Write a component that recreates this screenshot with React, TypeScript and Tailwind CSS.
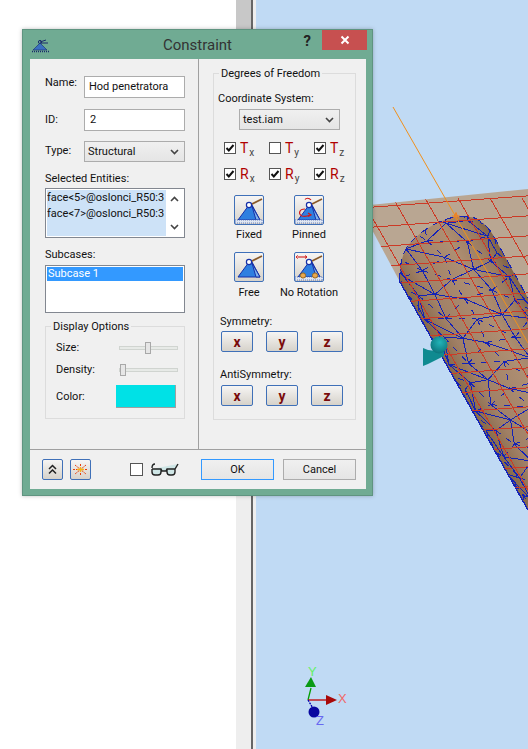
import type { ReactNode } from 'react';

const BTN = 'bg-gradient-to-b from-[#f6f5f4] to-[#d6d2ca] border border-[#3f70b8] rounded-[2px]';

function Chevron({ up = false }: { up?: boolean }) {
  return (
    <svg width="9" height="6" viewBox="0 0 9 6" className={up ? 'rotate-180' : ''}>
      <path d="M1 1l3.5 3.5L8 1" fill="none" stroke="#444" strokeWidth="1.6" />
    </svg>
  );
}

function Group({ title, className, children }: { title: string; className: string; children: ReactNode }) {
  return (
    <div className={`relative border border-[#dcdcdc] ${className}`}>
      <span className="absolute -top-[7px] left-[5px] bg-[#f0f0f0] px-[2px] leading-[14px]">{title}</span>
      {children}
    </div>
  );
}

function Select({ value, className }: { value: string; className: string }) {
  return (
    <div className={`flex items-center justify-between border border-[#acacac] bg-gradient-to-b from-[#f0f0f0] to-[#e5e5e5] pl-[3px] pr-[5px] ${className}`}>
      <span>{value}</span>
      <Chevron />
    </div>
  );
}

function Check({ on = true, className = '' }: { on?: boolean; className?: string }) {
  return (
    <div className={`h-[12px] w-[12px] border border-[#555] bg-white ${className}`}>
      {on && (
        <svg width="10" height="10" viewBox="0 0 10 10">
          <path d="M1.5 5l2.3 2.4L8.5 2" fill="none" stroke="#111" strokeWidth="2" />
        </svg>
      )}
    </div>
  );
}

function Dof({ letter, axis, on = true }: { letter: string; axis: string; on?: boolean }) {
  return (
    <div className="flex h-[12px] items-center">
      <Check on={on} />
      <span className="ml-[4px] text-[14px] leading-[12px] text-[#b00000]">{letter}</span>
      <span className="ml-[1px] mt-[9px] text-[10px] leading-[10px] text-[#444]">{axis}</span>
    </div>
  );
}

// kinematic symbol used on the four big buttons
function JointIcon({ kind }: { kind: 'fixed' | 'pinned' | 'free' | 'norot' }) {
  return (
    <svg width="28" height="28" viewBox="0 0 28 28">
      <path d="M15 9L27 3" stroke="#8a5a2a" strokeWidth="1.8" />
      <path d="M3 24L14 9h3l8 15z" fill="#2f7fe0" stroke="#1630a8" />
      <path d="M17 10l4 14h4z" fill="#7fb4ee" stroke="#1630a8" />
      {kind !== 'free' && <rect x="0" y="24" width="28" height="3" fill="#dfe6f2" stroke="#4a66b0" strokeDasharray="1 1" strokeWidth="0.8" />}
      <circle cx="14" cy="9" r="2.6" fill="#fff" stroke="#1630a8" strokeWidth="1.2" />
      {kind === 'pinned' && (
        <g fill="none" stroke="#d01818" strokeWidth="1.2">
          <path d="M16 4C14 1.5 11 2 10 3.5" />
          <path d="M10 13C4 13 3 18 7 20c3 1 6 0 8-1" />
          <path d="M13 17l3 2-3 1.5" />
        </g>
      )}
      {kind === 'norot' && (
        <g>
          <path d="M3 4h9" stroke="#d01818" strokeWidth="1.1" />
          <path d="M3 2.5L1 4l2 1.5M10 2.5L12 4l-2 1.5" fill="none" stroke="#d01818" />
          <circle cx="8" cy="22.5" r="2.6" fill="#e8a850" stroke="#9a6a20" />
          <circle cx="20" cy="22.5" r="2.6" fill="#e8a850" stroke="#9a6a20" />
        </g>
      )}
    </svg>
  );
}

function BigButton({ kind, label, gap }: { kind: 'fixed' | 'pinned' | 'free' | 'norot'; label: string; gap: string }) {
  return (
    <div className="flex flex-col items-center">
      <div className={`h-[30px] w-[30px] ${BTN}`}>
        <JointIcon kind={kind} />
      </div>
      <span className={`leading-[14px] whitespace-nowrap ${gap}`}>{label}</span>
    </div>
  );
}

function AxisButtons({ className }: { className: string }) {
  return (
    <div className={`flex gap-[13px] ${className}`}>
      {['x', 'y', 'z'].map((a) => (
        <div key={a} className={`flex h-[21px] w-[32px] items-center justify-center text-[14px] font-bold text-[#7a0c0c] ${BTN}`}>
          {a}
        </div>
      ))}
    </div>
  );
}

function Slider({ thumb }: { thumb: string }) {
  return (
    <div className="relative h-[4px] w-[59px] border border-[#d0d4d0] bg-[#e7eae7]">
      <div className={`absolute -top-[5px] h-[12px] w-[6px] border border-[#a8a8a8] bg-[#e6e6e6] ${thumb}`} />
    </div>
  );
}

// cylinder axis frame, used to lay out the FE mesh
function pt(s: number, t: number): [number, number] {
  return [400 + 0.49 * s + 0.87 * t, 282 + 0.87 * s - 0.49 * t];
}
const jitter = (a: number, b: number) => Math.sin(a * 12.9898 + b * 78.233) * 5;

function buildMesh() {
  const lines: string[] = [];
  const dashed: string[] = [];
  const cols = [0, 7, 24, 48, 74, 94, 104];
  const node = (i: number, j: number): [number, number] => pt(-50 + i * 25 + jitter(i, j), cols[j] + jitter(j, i));
  for (let i = 0; i < 14; i++) {
    for (let j = 0; j < cols.length; j++) {
      const [x, y] = node(i, j);
      if (j < cols.length - 1) {
        const [a, b] = node(i, j + 1);
        (i % 2 ? lines : dashed).push(`M${x} ${y}L${a} ${b}`);
        const [c, d] = node(i + 1, j + 1);
        ((i + j) % 2 ? lines : dashed).push(`M${x} ${y}L${c} ${d}`);
      }
      const [e, f] = node(i + 1, j);
      ((i * 3 + j) % 3 ? lines : dashed).push(`M${x} ${y}L${e} ${f}`);
    }
  }
  return { solid: lines.join(''), broken: dashed.join('') };
}

const CYL = 'M400 282C399 262 404 248 413 240C424 229 440 219 456 217C468 216 476 217 480 221C486 225 490 230 493 235L540 320V530L528 510Z';
const PLANE = 'M370 205L528 189V300L400 282L370 226Z';

function Scene() {
  const mesh = buildMesh();
  const ys = [200, 220, 240, 260, 278, 297, 315, 333, 353, 372, 392, 411, 431, 451, 471, 491];
  const xs = [361, 393, 425, 458, 490, 522, 554];
  return (
    <svg viewBox="256 0 272 749" className="block h-full w-full">
      <defs>
        <linearGradient id="cyl" gradientUnits="userSpaceOnUse" x1="400" y1="282" x2="491" y2="231">
          <stop offset="0" stopColor="#866848" />
          <stop offset="0.2" stopColor="#a08066" />
          <stop offset="0.6" stopColor="#ad8e72" />
          <stop offset="0.85" stopColor="#9c7c60" />
          <stop offset="1" stopColor="#806245" />
        </linearGradient>
        <radialGradient id="ball" cx="0.55" cy="0.35" r="0.7">
          <stop offset="0" stopColor="#22b4b8" />
          <stop offset="1" stopColor="#0a7078" />
        </radialGradient>
        <clipPath id="cylClip"><path d={CYL} /></clipPath>
        <clipPath id="allClip"><path d={CYL} /><path d={PLANE} /></clipPath>
      </defs>
      <path d={PLANE} fill="#b9a692" />
      <path d={CYL} fill="url(#cyl)" />
      <g clipPath="url(#cylClip)" shapeRendering="crispEdges">
        <path d={mesh.solid} fill="none" stroke="#1422b8" strokeWidth="1" />
        <path d={mesh.broken} fill="none" stroke="#1422b8" strokeWidth="1" strokeDasharray="6 7" />
      </g>
      <path d="M400 282L528 510" stroke="#1422b8" strokeWidth="1.4" shapeRendering="crispEdges" />
      <path d="M400 282C399 262 404 248 413 240C424 229 440 219 456 217C468 216 476 217 480 221C486 225 490 230 493 235L528 298" fill="none" stroke="#1422b8" strokeWidth="1" strokeDasharray="9 5" shapeRendering="crispEdges" />
      <g clipPath="url(#allClip)" stroke="#cc3a26" strokeWidth="1" fill="none" shapeRendering="crispEdges">
        {ys.map((y) => (
          <path key={y} d={`M360 ${y + 8}L540 ${y - 5}`} />
        ))}
        {xs.map((x) => (
          <path key={x} d={`M${x} 198L${x + 200} 548`} />
        ))}
      </g>
      <path d="M393 107L528 343" stroke="#f0901c" strokeWidth="1" fill="none" />
      <path d="M452 216h8M456 212v8M453 219l3-6 3 6" stroke="#f0801c" strokeWidth="1" fill="none" />
      <path d="M423 348L428 350L444 352L444 356L428 364L423 366Z" fill="#0f8a90" />
      <circle cx="439" cy="345" r="8.5" fill="url(#ball)" />
      {/* axis triad */}
      <path d="M308 700L311 688" stroke="#00a000" strokeWidth="1.3" />
      <path d="M308 700H327" stroke="#c00000" strokeWidth="1.3" />
      <path d="M308 700L314 710" stroke="#0000b0" strokeWidth="1.3" strokeDasharray="2 1" />
      <path d="M311 677L316 687L305 687Z" fill="#0a9a14" />
      <path d="M326 695L337 700L326 705Z" fill="#a80808" />
      <circle cx="314" cy="712" r="5.5" fill="#0808a0" />
      <text x="308" y="676" fontSize="13" fill="#66f066" fontFamily="Liberation Sans, sans-serif">Y</text>
      <text x="338" y="703" fontSize="13" fill="#f06868" fontFamily="Liberation Sans, sans-serif">X</text>
      <text x="316" y="725" fontSize="13" fill="#6868f0" fontFamily="Liberation Sans, sans-serif">Z</text>
    </svg>
  );
}

function Dialog() {
  return (
    <div className="absolute left-[22px] top-[29px] flex h-[467px] w-[351px] flex-col border border-[#5f9480] bg-[#70ab93] text-[11px] leading-[14px] text-[#111] shadow-[0_0_4px_rgba(0,0,0,0.25)] [font-family:Roboto,sans-serif]">
      <div className="grid h-[29px] shrink-0 grid-cols-[70px_1fr_70px]">
        <div className="pl-[9px] pt-[8px]">
          <svg width="17" height="15" viewBox="0 0 17 15">
            <path d="M8 4L14 2M8 5h8" stroke="#1a2a6a" strokeWidth="1" />
            <circle cx="8" cy="4" r="1.6" fill="none" stroke="#1a2a6a" />
            <path d="M1 12L8 5l7 7z" fill="#3a70c0" stroke="#1a2a6a" strokeWidth="0.6" />
            <path d="M0 13.5h17" stroke="#1a2a6a" strokeDasharray="1 1" strokeWidth="1.4" />
          </svg>
        </div>
        <div className="pt-[5px] text-center text-[15px] leading-[20px] text-[#333]">Constraint</div>
        <div className="flex items-start justify-end pr-[5px]">
          <span className="mr-[11px] mt-[2px] text-[15px] font-bold leading-[18px] text-[#222]">?</span>
          <div className="flex h-[20px] w-[45px] items-center justify-center bg-[#c75050]">
            <svg width="10" height="10" viewBox="0 0 10 10">
              <path d="M1.5 1.5l7 7M8.5 1.5l-7 7" stroke="#fff" strokeWidth="2" />
            </svg>
          </div>
        </div>
      </div>

      <div className="ml-[7px] flex h-[430px] w-[336px] flex-col bg-[#f0f0f0]">
        <div className="flex h-[391px] border-b border-[#a0a0a0]">
          {/* left column */}
          <div className="w-[168px] pl-[15px] pt-[17px]">
            <div className="flex h-[22px]">
              <span className="w-[39px]">Name:</span>
              <div className="flex h-[22px] w-[101px] items-center border border-[#acacac] bg-white pl-[4px]">Hod penetratora</div>
            </div>
            <div className="mt-[11px] flex h-[22px]">
              <span className="mt-[4px] w-[39px]">ID:</span>
              <div className="flex h-[22px] w-[101px] items-center border border-[#acacac] bg-white pl-[5px]">2</div>
            </div>
            <div className="mt-[10px] flex h-[21px]">
              <span className="mt-[3px] w-[39px]">Type:</span>
              <Select value="Structural" className="h-[21px] w-[101px]" />
            </div>
            <div className="mt-[10px]">Selected Entities:</div>
            <div className="mt-[2px] flex h-[50px] w-[140px] border border-[#828790] bg-white p-[1px]">
              <div className="h-full w-[119px] overflow-hidden whitespace-nowrap bg-[#cde2f7] leading-[16px]">
                <div>face&lt;5&gt;@oslonci_R50:3</div>
                <div>face&lt;7&gt;@oslonci_R50:3</div>
              </div>
              <div className="flex flex-1 flex-col items-center justify-between py-[6px]">
                <Chevron up />
                <Chevron />
              </div>
            </div>
            <div className="mt-[10px]">Subcases:</div>
            <div className="mt-[3px] h-[48px] w-[140px] border border-[#828790] bg-white p-[1px]">
              <div className="bg-[#3399ff] pl-[1px] text-white">Subcase 1</div>
            </div>
            <Group title="Display Options" className="mt-[13px] h-[93px] w-[140px] pl-[10px] pt-[14px]">
              <div className="flex h-[14px] items-center">
                <span className="w-[63px]">Size:</span>
                <Slider thumb="left-[25px]" />
              </div>
              <div className="mt-[8px] flex h-[14px] items-center">
                <span className="w-[63px]">Density:</span>
                <Slider thumb="left-0" />
              </div>
              <div className="mt-[8px] flex h-[23px] items-center">
                <span className="w-[60px]">Color:</span>
                <div className="h-[23px] w-[60px] border-b border-r border-[#a0a0a0] bg-[#00e1e6]" />
              </div>
            </Group>
          </div>
          {/* right column */}
          <div className="flex-1 border-l border-[#a0a0a0] pl-[14px] pt-[14px]">
            <Group title="Degrees of Freedom" className="h-[347px] w-[143px] pl-[4px] pt-[18px]">
              <div>Coordinate System:</div>
              <Select value="test.iam" className="ml-[21px] mt-[3px] h-[21px] w-[101px]" />
              <div className="ml-[6px] mt-[12px] grid w-[135px] grid-cols-3 gap-y-[14px]">
                <Dof letter="T" axis="x" />
                <Dof letter="T" axis="y" on={false} />
                <Dof letter="T" axis="z" />
                <Dof letter="R" axis="x" />
                <Dof letter="R" axis="y" />
                <Dof letter="R" axis="z" />
              </div>
              <div className="ml-[1px] mt-[15px] grid w-[120px] grid-cols-2 gap-y-[10px]">
                <BigButton kind="fixed" label="Fixed" gap="mt-[3px]" />
                <BigButton kind="pinned" label="Pinned" gap="mt-[3px]" />
                <BigButton kind="free" label="Free" gap="mt-[4px]" />
                <BigButton kind="norot" label="No Rotation" gap="mt-[4px]" />
              </div>
              <div className="ml-[2px] mt-[15px]">Symmetry:</div>
              <AxisButtons className="ml-[3px] mt-[2px]" />
              <div className="ml-[2px] mt-[16px]">AntiSymmetry:</div>
              <AxisButtons className="ml-[3px] mt-[3px]" />
            </Group>
          </div>
        </div>

        {/* footer */}
        <div className="flex h-[39px] items-center pl-[12px]">
          <div className={`flex h-[21px] w-[21px] flex-col items-center justify-center ${BTN}`}>
            <svg width="11" height="11" viewBox="0 0 11 11">
              <path d="M2 5l3.5-3.5L9 5M2 9.5L5.5 6 9 9.5" fill="none" stroke="#222" strokeWidth="1.5" />
            </svg>
          </div>
          <div className={`ml-[7px] flex h-[21px] w-[21px] items-center justify-center ${BTN}`}>
            <svg width="17" height="13" viewBox="0 0 17 13">
              <path d="M8.5 1v11M1 6.5h15M3 2l11 9M14 2L3 11" stroke="#e8400c" strokeWidth="1" strokeDasharray="2 1" />
              <path d="M5 6.5h7M8.5 4v5" stroke="#f5b518" strokeWidth="1.4" />
            </svg>
          </div>
          <div className="ml-[39px] h-[13px] w-[13px] border border-[#555] bg-white" />
          <svg width="29" height="13" viewBox="0 0 29 13" className="ml-[8px]">
            <path d="M1 5q0-4 3-4M1 6h9l1 2h4l1-2h8l3-5M1 6v3q0 3 3 3h3q3 0 3-3V6M16 6v3q0 3 3 3h2q3 0 3-3V6" fill="#cfe6e6" stroke="#222" strokeWidth="1.4" />
          </svg>
          <div className="ml-[21px] flex h-[21px] w-[73px] items-center justify-center border border-[#3399ff] bg-gradient-to-b from-[#f0f0f0] to-[#e5e5e5]">OK</div>
          <div className="ml-[9px] flex h-[21px] w-[73px] items-center justify-center border border-[#acacac] bg-gradient-to-b from-[#f0f0f0] to-[#e5e5e5]">Cancel</div>
        </div>
      </div>
    </div>
  );
}

export default function App() {
  return (
    <div className="relative flex h-[749px] w-[528px] overflow-hidden bg-white">
      <div className="w-[236px] bg-white" />
      <div className="flex w-[15px] flex-col">
        <div className="h-[100px] bg-[#c8c8c8]" />
        <div className="flex-1 bg-[#eeeeee]" />
      </div>
      <div className="w-[2px] bg-[#666666]" />
      <div className="w-[3px] bg-[#eeeeee]" />
      <div className="flex-1 bg-[#c0daf4]">
        <Scene />
      </div>
      <Dialog />
    </div>
  );
}
